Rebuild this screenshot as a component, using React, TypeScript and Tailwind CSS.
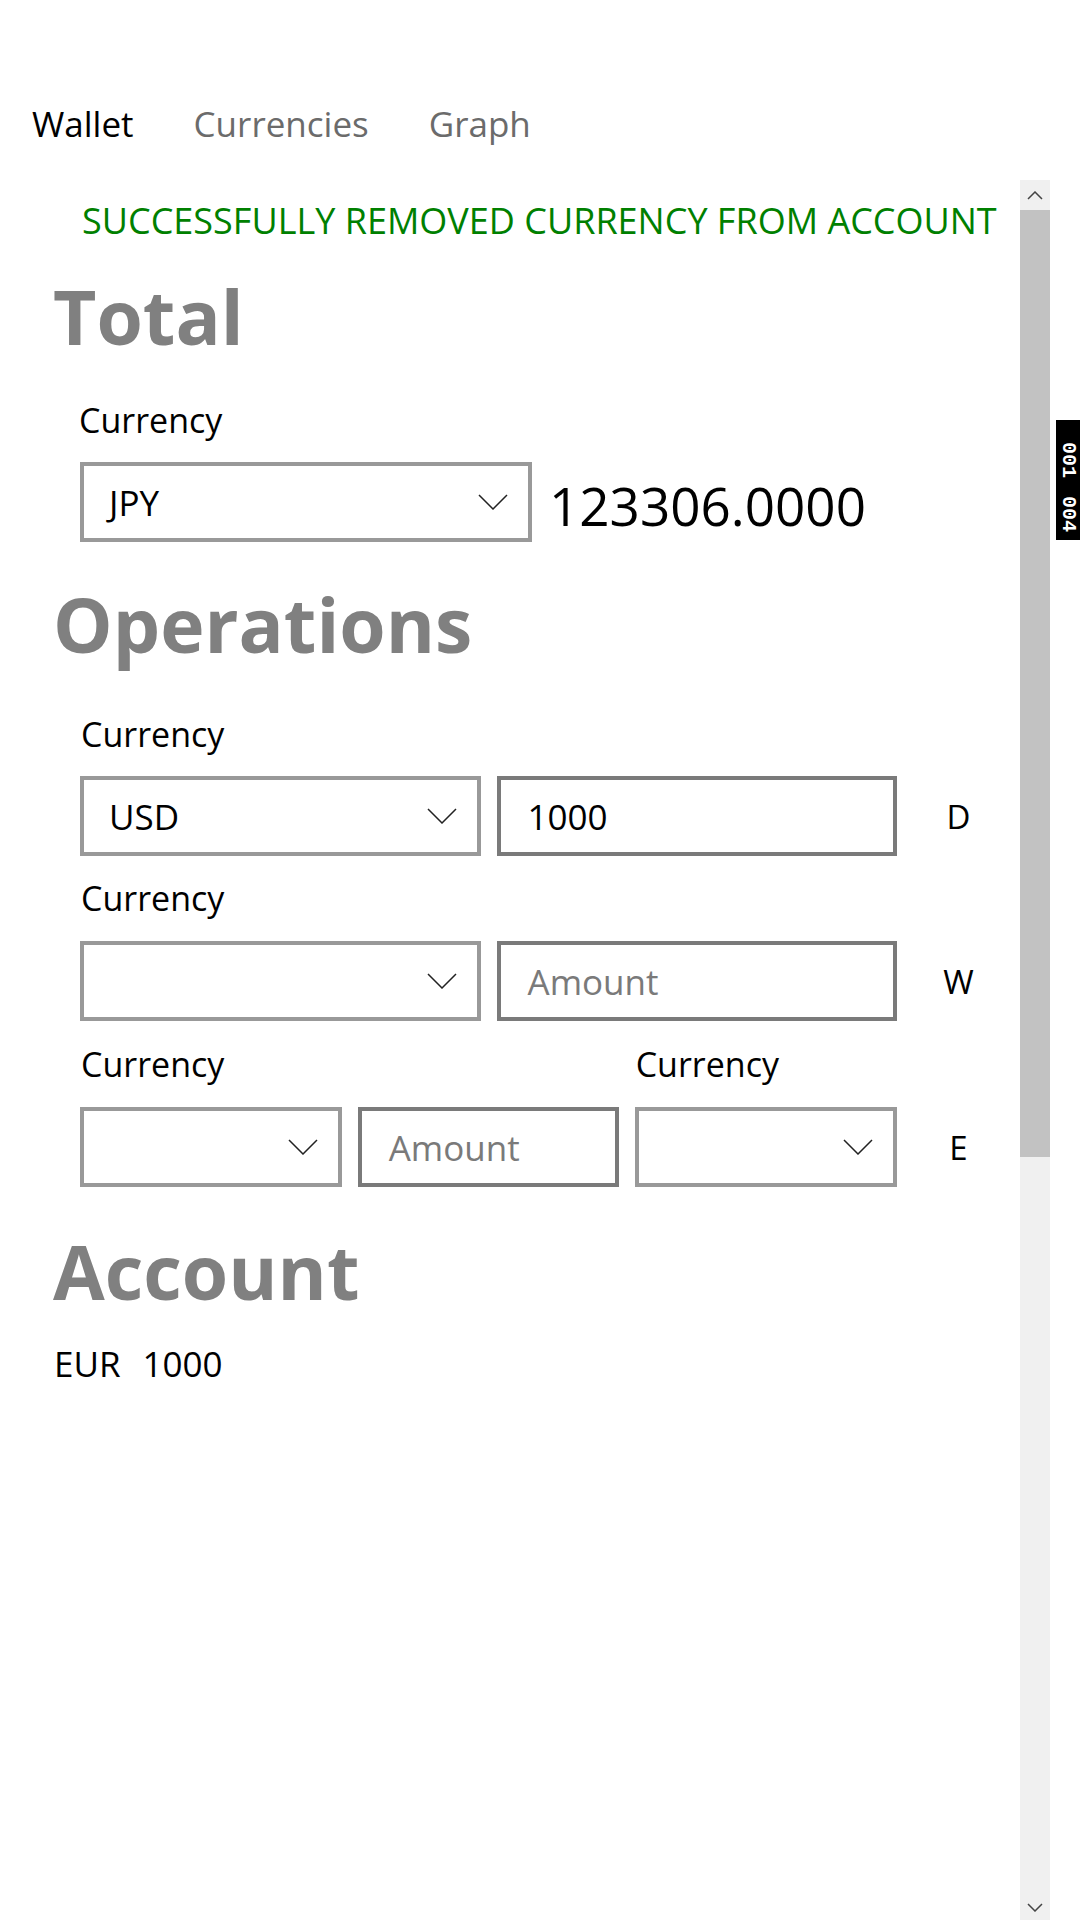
import React from 'react';

const Chevron = () => (
  <svg width="30" height="16" viewBox="0 0 30 16" fill="none">
    <path d="M1 1L15 15L29 1" stroke="#222" strokeWidth="1.5" />
  </svg>
);

const Combo = ({ value, className = '' }: { value?: string; className?: string }) => (
  <div className={`h-[80px] border-4 border-[#999999] bg-white flex items-center justify-between pl-[25px] pr-[20px] ${className}`}>
    <span className="text-[35px] leading-none text-black">{value}</span>
    <Chevron />
  </div>
);

const Field = ({ value, placeholder }: { value?: string; placeholder?: string }) => (
  <div className="h-[80px] border-4 border-[#7a7a7a] bg-white flex items-center pl-[27px]">
    {value ? (
      <span className="text-[35px] leading-none text-black">{value}</span>
    ) : (
      <span className="text-[35px] leading-none text-[#7a7a7a]">{placeholder}</span>
    )}
  </div>
);

const Label = ({ children }: { children: React.ReactNode }) => (
  <div className="text-[34px] leading-none text-black">{children}</div>
);

const Heading = ({ children }: { children: React.ReactNode }) => (
  <h1 className="ml-[53px] text-[75px] leading-none font-bold text-[#808080]">{children}</h1>
);

const Action = ({ letter }: { letter: string }) => (
  <button className="flex-1 text-center text-[33px] leading-none text-black">{letter}</button>
);

export default function App() {
  return (
    <div className="relative w-[1080px] h-[1920px] bg-white overflow-hidden flex flex-col font-['Open_Sans',sans-serif]">
      {/* pivot headers */}
      <div className="flex gap-[60px] pl-[32px] pt-[106px] text-[35px] leading-none">
        <span className="text-black">Wallet</span>
        <span className="text-[#6b6b6b]">Currencies</span>
        <span className="text-[#6b6b6b]">Graph</span>
      </div>

      <div className="mt-[39px] flex flex-1">
        <div className="w-[1020px] flex flex-col">
          <p className="mt-[23px] ml-[82px] text-[36px] leading-none text-[#008000]">
            SUCCESSFULLY REMOVED CURRENCY FROM ACCOUNT
          </p>

          <div className="mt-[40px]">
            <Heading>Total</Heading>
          </div>
          <div className="mt-[49px] ml-[79px]">
            <Label>Currency</Label>
          </div>
          <div className="mt-[25px] ml-[80px] flex items-center">
            <Combo value="JPY" className="w-[452px]" />
            <span className="ml-[17px] mt-[6px] text-[53px] leading-none text-black">123306.0000</span>
          </div>

          <div className="mt-[45px]">
            <Heading>Operations</Heading>
          </div>

          <div className="ml-[80px] flex flex-col">
            {/* deposit */}
            <div className="mt-[55px] w-[817px] pl-[1px]">
              <Label>Currency</Label>
            </div>
            <div className="mt-[25px] flex items-center">
              <div className="w-[817px] grid grid-cols-2 gap-4">
                <Combo value="USD" />
                <Field value="1000" />
              </div>
              <Action letter="D" />
            </div>

            {/* withdraw */}
            <div className="mt-[25px] w-[817px] pl-[1px]">
              <Label>Currency</Label>
            </div>
            <div className="mt-[26px] flex items-center">
              <div className="w-[817px] grid grid-cols-2 gap-4">
                <Combo />
                <Field placeholder="Amount" />
              </div>
              <Action letter="W" />
            </div>

            {/* exchange */}
            <div className="mt-[26px] w-[817px] grid grid-cols-3 gap-4 pl-[1px]">
              <Label>Currency</Label>
              <div />
              <Label>Currency</Label>
            </div>
            <div className="mt-[26px] flex items-center">
              <div className="w-[817px] grid grid-cols-3 gap-4">
                <Combo />
                <Field placeholder="Amount" />
                <Combo />
              </div>
              <Action letter="E" />
            </div>
          </div>

          <div className="mt-[47px]">
            <Heading>Account</Heading>
          </div>
          <div className="mt-[37px] ml-[54px] flex gap-[22px] text-[35px] leading-none text-black">
            <span>EUR</span>
            <span>1000</span>
          </div>
        </div>

        {/* scrollbar */}
        <div className="w-[30px] bg-[#f0f0f0] flex flex-col">
          <div className="h-[30px] flex items-center justify-center">
            <svg width="16" height="9" viewBox="0 0 16 9" fill="none">
              <path d="M1 8L8 1L15 8" stroke="#444" strokeWidth="1.5" />
            </svg>
          </div>
          <div className="h-[947px] bg-[#c2c2c2]" />
          <div className="flex-1" />
          <div className="h-[30px] flex items-center justify-center pt-[4px]">
            <svg width="16" height="9" viewBox="0 0 16 9" fill="none">
              <path d="M1 1L8 8L15 1" stroke="#444" strokeWidth="1.5" />
            </svg>
          </div>
        </div>
        <div className="w-[30px] bg-white" />
      </div>

      {/* frame counter overlay */}
      <div className="absolute left-[1056px] top-[420px] w-[24px] h-[120px] bg-black flex flex-col items-center pt-[22px] gap-[18px] text-white font-['Liberation_Mono',monospace] text-[20px] font-bold leading-none">
        <span className="[writing-mode:vertical-rl]">001</span>
        <span className="[writing-mode:vertical-rl]">004</span>
      </div>
    </div>
  );
}
